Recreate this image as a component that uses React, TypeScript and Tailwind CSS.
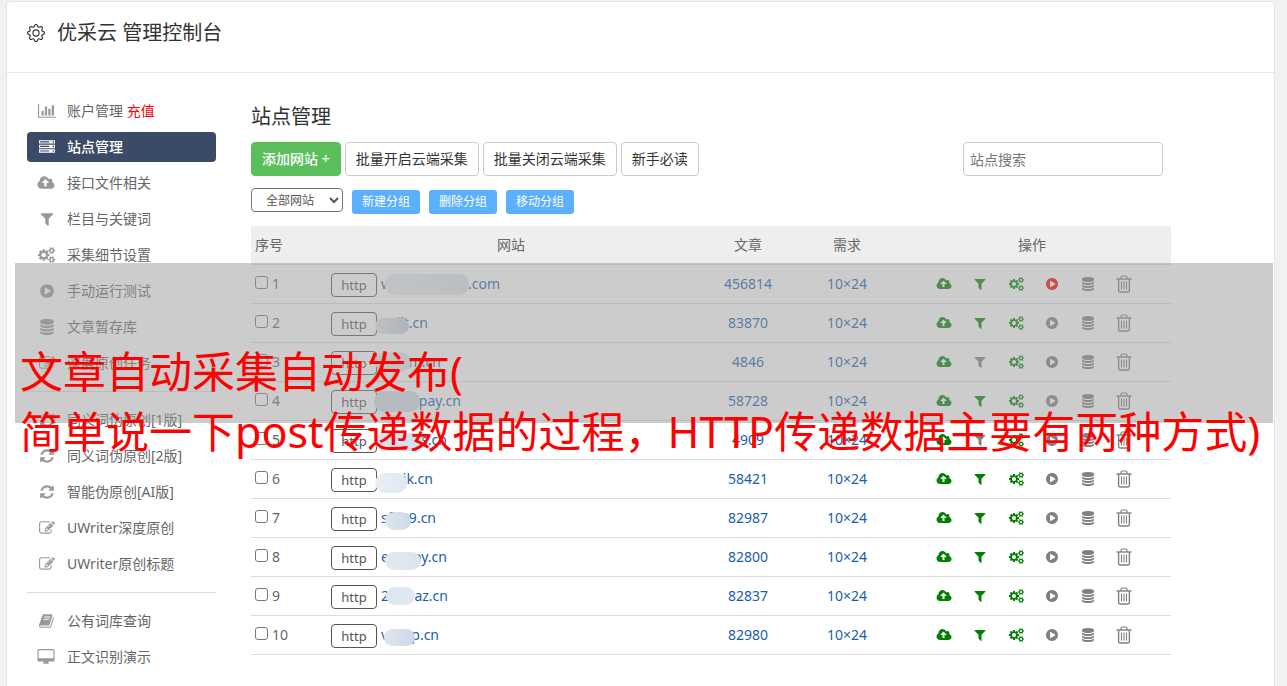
import { BsGear } from "react-icons/bs";

interface Glyph {
  width: number;
  d: string;
}

const glyphs: Record<string, Glyph> = {
  chart: {
    width: 2048,
    d: "M640 896v512h-256v-512h256zm384-512v1024h-256v-1024h256zm1024 1152v128h-2048v-1536h128v1408h1920zm-640-896v768h-256v-768h256zm384-384v1152h-256v-1152h256z",
  },
  server: {
    width: 1792,
    d: "M128 1408h1024v-128h-1024v128zm0-512h1024v-128h-1024v128zm1568 448q0-40-28-68t-68-28-68 28-28 68 28 68 68 28 68-28 28-68zm-1568-960h1024v-128h-1024v128zm1568 448q0-40-28-68t-68-28-68 28-28 68 28 68 68 28 68-28 28-68zm0-512q0-40-28-68t-68-28-68 28-28 68 28 68 68 28 68-28 28-68zm96 832v384h-1792v-384h1792zm0-512v384h-1792v-384h1792zm0-512v384h-1792v-384h1792z",
  },
  upload: {
    width: 1920,
    d: "M1216 864q0-14-9-23l-352-352q-9-9-23-9t-23 9l-351 351q-10 12-10 24 0 14 9 23t23 9h224v352q0 13 9.5 22.5t22.5 9.5h192q13 0 22.5-9.5t9.5-22.5v-352h224q13 0 22.5-9.5t9.5-22.5zm640 288q0 159-112.5 271.5t-271.5 112.5h-1088q-185 0-316.5-131.5t-131.5-316.5q0-130 70-240t188-165q-2-30-2-43 0-212 150-362t362-150q156 0 285.5 87t188.5 231q71-62 166-62 106 0 181 75t75 181q0 76-41 138 130 31 213.5 135.5t83.5 238.5z",
  },
  filter: {
    width: 1792,
    d: "M1595 295q17 41-14 70l-493 493v742q0 42-39 59-13 5-25 5-27 0-45-19l-256-256q-19-19-19-45v-486l-493-493q-31-29-14-70 17-39 59-39h1280q42 0 59 39z",
  },
  cogs: {
    width: 1920,
    d: "M896 896q0-106-75-181t-181-75-181 75-75 181 75 181 181 75 181-75 75-181zm768 512q0-52-38-90t-90-38-90 38-38 90q0 53 37.5 90.5t90.5 37.5 90.5-37.5 37.5-90.5zm0-1024q0-52-38-90t-90-38-90 38-38 90q0 53 37.5 90.5t90.5 37.5 90.5-37.5 37.5-90.5zm-384 421v185q0 10-7 19.5t-16 10.5l-155 24q-11 35-32 76 34 48 90 115 7 11 7 20 0 12-7 19-23 30-82.5 89.5t-78.5 59.5q-11 0-21-7l-115-90q-37 19-77 31-11 108-23 155-7 24-30 24h-186q-11 0-20-7.5t-10-17.5l-23-153q-34-10-75-31l-118 89q-7 7-20 7-11 0-21-8-144-133-144-160 0-9 7-19 10-14 41-53t47-61q-23-44-35-82l-152-24q-10-1-17-9.5t-7-19.5v-185q0-10 7-19.5t16-10.5l155-24q11-35 32-76-34-48-90-115-7-11-7-20 0-12 7-20 22-30 82-89t79-59q11 0 21 7l115 90q34-18 77-32 11-108 23-154 7-24 30-24h186q11 0 20 7.5t10 17.5l23 153q34 10 75 31l118-89q8-7 20-7 11 0 21 8 144 133 144 160 0 8-7 19-12 16-42 54t-45 60q23 48 34 82l152 23q10 2 17 10.5t7 19.5zm640 533v140q0 16-149 31-12 27-30 52 51 113 51 138 0 4-4 7-122 71-124 71-8 0-46-47t-52-68q-20 2-30 2t-30-2q-14 21-52 68t-46 47q-2 0-124-71-4-3-4-7 0-25 51-138-18-25-30-52-149-15-149-31v-140q0-16 149-31 13-29 30-52-51-113-51-138 0-4 4-7 4-2 35-20t59-34 30-16q8 0 46 46.5t52 67.5q20-2 30-2t30 2q51-71 92-112l6-2q4 0 124 70 4 3 4 7 0 25-51 138 17 23 30 52 149 15 149 31zm0-1024v140q0 16-149 31-12 27-30 52 51 113 51 138 0 4-4 7-122 71-124 71-8 0-46-47t-52-68q-20 2-30 2t-30-2q-14 21-52 68t-46 47q-2 0-124-71-4-3-4-7 0-25 51-138-18-25-30-52-149-15-149-31v-140q0-16 149-31 13-29 30-52-51-113-51-138 0-4 4-7 4-2 35-20t59-34 30-16q8 0 46 46.5t52 67.5q20-2 30-2t30 2q51-71 92-112l6-2q4 0 124 70 4 3 4 7 0 25-51 138 17 23 30 52 149 15 149 31z",
  },
  play: {
    width: 1792,
    d: "M896 128q209 0 385.5 103t279.5 279.5 103 385.5-103 385.5-279.5 279.5-385.5 103-385.5-103-279.5-279.5-103-385.5 103-385.5 279.5-279.5 385.5-103zm384 823q32-18 32-55t-32-55l-544-320q-31-19-64-1-32 19-32 56v640q0 37 32 56 16 8 32 8 17 0 32-9z",
  },
  database: {
    width: 1792,
    d: "M896 768q237 0 443-43t325-127v170q0 69-103 128t-280 93.5-385 34.5-385-34.5-280-93.5-103-128v-170q119 84 325 127t443 43zm0 768q237 0 443-43t325-127v170q0 69-103 128t-280 93.5-385 34.5-385-34.5-280-93.5-103-128v-170q119 84 325 127t443 43zm0-384q237 0 443-43t325-127v170q0 69-103 128t-280 93.5-385 34.5-385-34.5-280-93.5-103-128v-170q119 84 325 127t443 43zm0-1152q208 0 385 34.5t280 93.5 103 128v128q0 69-103 128t-280 93.5-385 34.5-385-34.5-280-93.5-103-128v-128q0-69 103-128t280-93.5 385-34.5z",
  },
  edit: {
    width: 1792,
    d: "M888 1184l116-116-152-152-116 116v56h96v96h56zm440-720q-16-16-33 1l-350 350q-17 17-1 33t33-1l350-350q17-17 1-33zm80 594v190q0 119-84.5 203.5t-203.5 84.5h-832q-119 0-203.5-84.5t-84.5-203.5v-832q0-119 84.5-203.5t203.5-84.5h832q63 0 117 25 15 7 18 23 3 17-9 29l-49 49q-14 14-32 8-23-6-45-6h-832q-66 0-113 47t-47 113v832q0 66 47 113t113 47h832q66 0 113-47t47-113v-126q0-13 9-22l64-64q15-15 35-7t20 29zm-96-738l288 288-672 672h-288v-288zm444 132l-92 92-288-288 92-92q28-28 68-28t68 28l152 152q28 28 28 68t-28 68z",
  },
  refresh: {
    width: 1792,
    d: "M1639 1056q0 5-1 7-64 268-268 434.5t-478 166.5q-146 0-282.5-55t-243.5-157l-129 129q-19 19-45 19t-45-19-19-45v-448q0-26 19-45t45-19h448q26 0 45 19t19 45-19 45l-137 137q71 66 161 102t187 36q134 0 250-65t186-179q11-17 53-117 8-23 30-23h192q13 0 22.5 9.5t9.5 22.5zm25-800v448q0 26-19 45t-45 19h-448q-26 0-45-19t-19-45 19-45l138-138q-148-137-349-137-134 0-250 65t-186 179q-11 17-53 117-8 23-30 23h-199q-13 0-22.5-9.5t-9.5-22.5v-7q65-268 270-434.5t480-166.5q146 0 284 55.5t245 156.5l130-129q19-19 45-19t45 19 19 45z",
  },
  book: {
    width: 1792,
    d: "M1639 478q40 57 18 129l-275 906q-19 64-76.5 107.5t-122.5 43.5h-923q-77 0-148.5-53.5t-99.5-131.5q-24-67-2-127 0-4 3-27t4-37q1-8-3-21.5t-3-19.5q2-11 8-21t16.5-23.5 16.5-23.5q23-38 45-91.5t30-91.5q3-10 .5-30t-.5-28q3-11 17-28t17-23q21-36 42-92t25-90q1-9-2.5-32t.5-28q4-13 22-30.5t22-22.5q19-26 42.5-84.5t27.5-96.5q1-8-3-25.5t-2-26.5q2-8 9-18t18-23 17-21q8-12 16.5-30.5t15-35 16-36 19.5-32 26.5-23.5 36-11.5 47.5 5.5l-1 3q38-9 51-9h761q74 0 114 56t18 130l-274 906q-36 119-71.5 153.5t-128.5 34.5h-869q-27 0-38 15-11 16-1 43 24 70 144 70h923q29 0 56-15.5t35-41.5l300-987q7-22 5-57 38 15 59 43zm-1064 2q-4 13 2 22.5t20 9.5h608q13 0 25.5-9.5t16.5-22.5l21-64q4-13-2-22.5t-20-9.5h-608q-13 0-25.5 9.5t-16.5 22.5zm-83 256q-4 13 2 22.5t20 9.5h608q13 0 25.5-9.5t16.5-22.5l21-64q4-13-2-22.5t-20-9.5h-608q-13 0-25.5 9.5t-16.5 22.5z",
  },
  desktop: {
    width: 1920,
    d: "M1728 992v-832q0-13-9.5-22.5t-22.5-9.5h-1600q-13 0-22.5 9.5t-9.5 22.5v832q0 13 9.5 22.5t22.5 9.5h1600q13 0 22.5-9.5t9.5-22.5zm128-832v1088q0 66-47 113t-113 47h-544q0 37 16 77.5t32 71 16 43.5q0 26-19 45t-45 19h-512q-26 0-45-19t-19-45q0-14 16-44t32-70 16-78h-544q-66 0-113-47t-47-113v-1088q0-66 47-113t113-47h1600q66 0 113 47t47 113z",
  },
};

function Icon({ name, className }: { name: string; className: string }) {
  const glyph = glyphs[name];
  return (
    <svg
      viewBox={`0 0 ${glyph.width} 1792`}
      className={`w-auto shrink-0 overflow-visible fill-current ${className}`}
      aria-hidden="true"
    >
      <path d={glyph.d} />
    </svg>
  );
}

function TrashIcon() {
  return (
    <svg viewBox="0 0 16 18" className="h-[18px] w-4" fill="none" stroke="currentColor" aria-hidden="true">
      <path d="M0.5 4h15" strokeWidth="1.4" />
      <path d="M5 4V2.2Q5 1 6.2 1H9.8Q11 1 11 2.2V4" strokeWidth="1.2" />
      <path d="M2.6 4V15.6Q2.6 17 4 17H12Q13.4 17 13.4 15.6V4" strokeWidth="1.4" />
      <path d="M5.5 6.5v8M8 6.5v8M10.5 6.5v8" strokeWidth="1.1" />
    </svg>
  );
}

interface MenuItem {
  icon: string;
  label: string;
  extra?: string;
  active?: boolean;
}

const menuGroups: MenuItem[][] = [
  [
    { icon: "chart", label: "账户管理", extra: "充值" },
    { icon: "server", label: "站点管理", active: true },
    { icon: "upload", label: "接口文件相关" },
    { icon: "filter", label: "栏目与关键词" },
    { icon: "cogs", label: "采集细节设置" },
    { icon: "play", label: "手动运行测试" },
    { icon: "database", label: "文章暂存库" },
    { icon: "edit", label: "深度原创任务" },
  ],
  [
    { icon: "refresh", label: "同义词伪原创[1版]" },
    { icon: "refresh", label: "同义词伪原创[2版]" },
    { icon: "refresh", label: "智能伪原创[AI版]" },
    { icon: "edit", label: "UWriter深度原创" },
    { icon: "edit", label: "UWriter原创标题" },
  ],
  [
    { icon: "book", label: "公有词库查询" },
    { icon: "desktop", label: "正文识别演示" },
  ],
];

interface Site {
  id: number;
  head: string;
  tail: string;
  width: number;
  // smudge over the middle of the domain: left, top, width, height
  mask: [number, number, number, number];
  tone: string;
  articles: number;
  filterOn: boolean;
  running?: boolean;
}

const sites: Site[] = [
  { id: 1, head: "w", tail: ".com", width: 119, mask: [4, 0, 84, 21], tone: "from-[#e8edf3] to-[#dde4ea]", articles: 456814, filterOn: true, running: true },
  { id: 2, head: "", tail: "ilt.cn", width: 47, mask: [-6, 5, 34, 16], tone: "from-[#e3e7ec] to-[#c3d0e2]", articles: 83870, filterOn: true },
  { id: 3, head: "", tail: "m.cn", width: 60, mask: [-6, 0, 36, 20], tone: "from-[#e6eaee] to-[#e0e6ec]", articles: 4846, filterOn: false },
  { id: 4, head: "", tail: "pay.cn", width: 80, mask: [-7, 0, 46, 21], tone: "from-[#d3dce4] to-[#cfdbe6]", articles: 58728, filterOn: true },
  { id: 5, head: "", tail: "s.cn", width: 66, mask: [-6, 3, 48, 18], tone: "from-[#d9e3ee] to-[#d3e0ee]", articles: 4909, filterOn: false },
  { id: 6, head: "", tail: "jk.cn", width: 52, mask: [-6, 4, 32, 20], tone: "from-[#eaeff2] to-[#dfe8f2]", articles: 58421, filterOn: true },
  { id: 7, head: "sf", tail: "39.cn", width: 55, mask: [4, 4, 26, 18], tone: "from-[#dde6ef] to-[#ccdae8]", articles: 82987, filterOn: true },
  { id: 8, head: "e", tail: "oy.cn", width: 66, mask: [4, 5, 36, 18], tone: "from-[#e4e9ef] to-[#dce4ee]", articles: 82800, filterOn: true },
  { id: 9, head: "2", tail: "az.cn", width: 67, mask: [5, 1, 29, 18], tone: "from-[#dce5ed] to-[#e2e9f1]", articles: 82837, filterOn: true },
  { id: 10, head: "v", tail: "p.cn", width: 58, mask: [3, 4, 31, 17], tone: "from-[#e0e5ea] to-[#cbdaea]", articles: 82980, filterOn: true },
];

function Sidebar() {
  return (
    <nav className="w-[189px] shrink-0 pt-[23px]">
      {menuGroups.map((group, index) => (
        <ul
          key={index}
          className={`flex flex-col gap-1.5 ${index > 0 ? "mt-[13px] border-t border-[#dcdcdc] pt-[13px]" : ""}`}
        >
          {group.map((item) => (
            <li key={item.label}>
              <a
                href="#"
                className={`flex h-[30px] items-center gap-2.5 rounded pl-2.5 ${
                  item.active ? "bg-[#3b4a66] font-medium text-white" : "text-[#666]"
                }`}
              >
                <span className={`flex w-5 justify-center ${item.active ? "text-white" : "text-[#999]"}`}>
                  <Icon name={item.icon} className="h-4" />
                </span>
                <span>
                  {item.label}
                  {item.extra && <span className="text-[#ff0000]"> {item.extra}</span>}
                </span>
              </a>
            </li>
          ))}
        </ul>
      ))}
    </nav>
  );
}

function SiteRow({ site }: { site: Site }) {
  const [left, top, width, height] = site.mask;
  return (
    <tr className="h-[39px] border-b border-[#dcdcdc]">
      <td className="px-1">
        <label className="flex items-center gap-1">
          <input
            type="checkbox"
            className="mb-[3px] size-[13px] appearance-none rounded-[3px] border border-[#767676] bg-white"
          />
          {site.id}
        </label>
      </td>
      <td className="px-1">
        <div className="flex items-center gap-1">
          <span className="mt-0.5 flex h-6 w-[46px] items-center justify-center rounded border border-[#555] pt-0.5 text-[13px] text-[#555]">
            http
          </span>
          <a href="#" className="relative flex justify-between text-[#1a5dab]" style={{ width: site.width }}>
            <span>{site.head}</span>
            <span>{site.tail}</span>
            <span
              className={`absolute rounded-[10px] bg-linear-to-r ${site.tone}`}
              style={{ left, top, width, height }}
            />
          </a>
        </div>
      </td>
      <td className="px-1 text-center">
        <a href="#" className="text-[#1a5dab]">{site.articles}</a>
      </td>
      <td className="px-1 text-center">
        <a href="#" className="text-[#1a5dab]">10×24</a>
      </td>
      <td className="pr-1 pl-2">
        <div className="flex items-center justify-center text-[#808080]">
          <button type="button" aria-label="上传" className="flex w-9 justify-center text-[#008000]">
            <Icon name="upload" className="h-3.5" />
          </button>
          <button
            type="button"
            aria-label="关键词"
            className={`flex w-9 justify-center ${site.filterOn ? "text-[#008000]" : ""}`}
          >
            <Icon name="filter" className="h-3.5" />
          </button>
          <button type="button" aria-label="设置" className="flex w-9 justify-center text-[#008000]">
            <Icon name="cogs" className="h-3.5" />
          </button>
          <button
            type="button"
            aria-label="运行"
            className={`flex w-9 justify-center ${site.running ? "text-[#ff0000]" : ""}`}
          >
            <Icon name="play" className="h-3.5" />
          </button>
          <button type="button" aria-label="暂存库" className="flex w-9 justify-center">
            <Icon name="database" className="h-3.5" />
          </button>
          <button type="button" aria-label="删除" className="flex w-9 justify-center">
            <TrashIcon />
          </button>
        </div>
      </td>
    </tr>
  );
}

export default function App() {
  return (
    <div className="relative flex h-screen flex-col overflow-hidden bg-[#f1f1f1] pt-px pr-3 pl-1.5 font-['Noto_Sans','Noto_Sans_CJK_SC',sans-serif] text-sm text-[#666]">
      <div className="flex-1 rounded-t border border-b-0 border-[#e5e5e5] bg-white">
        {/* Header */}
        <header className="flex h-[71px] items-start gap-3 border-b border-[#e5e5e5] px-5 pt-4 text-[#333]">
          <BsGear className="mt-1.5 size-[18px]" />
          <h1 className="text-xl leading-[30px]">优采云 管理控制台</h1>
        </header>

        <div className="flex gap-[35px] pr-[103px] pl-5">
          <Sidebar />

          <main className="min-w-0 flex-1 pt-[29px]">
            <h2 className="text-xl leading-[30px] text-[#333]">站点管理</h2>

            {/* Toolbar */}
            <div className="mt-2.5 flex items-center gap-1 pr-2 text-[#333]">
              <button type="button" className="h-[34px] rounded border border-[#5abf5a] bg-[#5abf5a] px-2.5 font-medium text-white">
                添加网站 +
              </button>
              <button type="button" className="h-[34px] rounded border border-[#ccc] px-2.5">批量开启云端采集</button>
              <button type="button" className="h-[34px] rounded border border-[#ccc] px-2.5">批量关闭云端采集</button>
              <button type="button" className="h-[34px] rounded border border-[#ccc] px-2.5">新手必读</button>
              <input
                type="text"
                aria-label="站点搜索"
                placeholder="站点搜索"
                className="ml-auto h-[34px] w-[200px] rounded border border-[#ccc] px-1.5 placeholder:text-[#757575]"
              />
            </div>

            {/* Groups */}
            <div className="mt-3 flex gap-[9px] text-xs">
              <select
                aria-label="网站分组"
                className="h-6 w-[92px] rounded border border-[#767676] bg-white pl-2.5 text-[#555]"
              >
                <option>全部网站</option>
              </select>
              <button type="button" className="mt-0.5 h-6 rounded-[3px] bg-[#5aafff] px-2.5 text-white">新建分组</button>
              <button type="button" className="mt-0.5 h-6 rounded-[3px] bg-[#5aafff] px-2.5 text-white">删除分组</button>
              <button type="button" className="mt-0.5 h-6 rounded-[3px] bg-[#5aafff] px-2.5 text-white">移动分组</button>
            </div>

            <table className="mt-3 w-full table-fixed border-collapse">
              <thead>
                <tr className="h-[38px] border-b border-[#dcdcdc] bg-[#eee]">
                  <th className="w-[76px] px-1 text-left font-normal">序号</th>
                  <th className="px-1 font-normal">网站</th>
                  <th className="w-[106px] px-1 font-normal">文章</th>
                  <th className="w-[92px] px-1 font-normal">需求</th>
                  <th className="w-[278px] px-1 font-normal">操作</th>
                </tr>
              </thead>
              <tbody>
                {sites.map((site) => (
                  <SiteRow key={site.id} site={site} />
                ))}
              </tbody>
            </table>
          </main>
        </div>
      </div>

      {/* Caption band over the page */}
      <div className="pointer-events-none absolute top-[263px] right-3.5 left-[15px] h-40 bg-[#999]/50 pt-[79px] pl-[5px]">
        <p className="text-[43px] leading-[60px] whitespace-nowrap text-[#ff0000]">
          文章自动采集自动发布(
          <br />
          简单说一下post传递数据的过程，HTTP传递数据主要有两种方式)
        </p>
      </div>
    </div>
  );
}
